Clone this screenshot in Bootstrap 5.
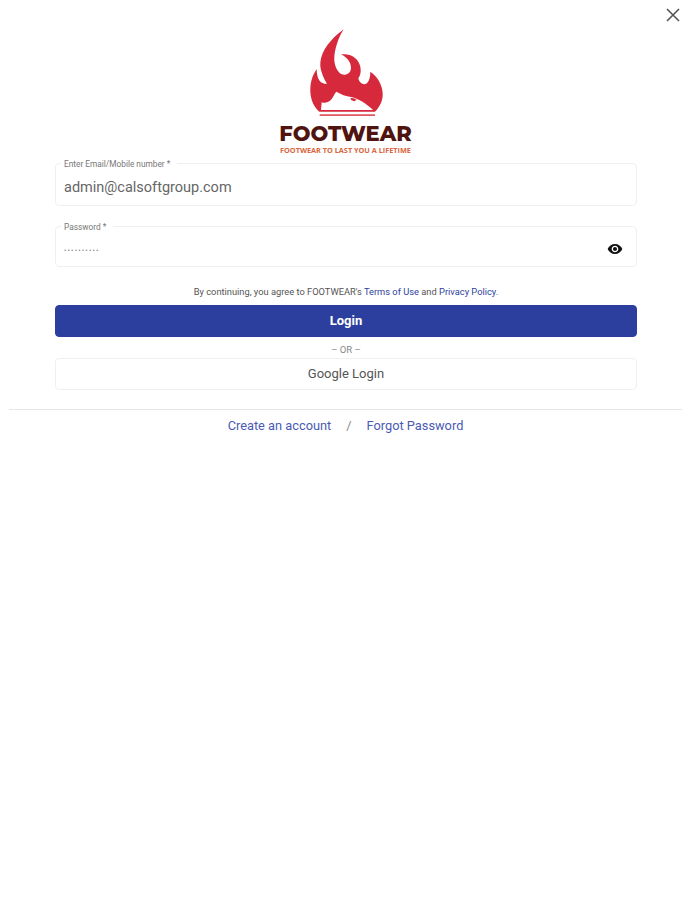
<!DOCTYPE html>
<html lang="en">
<head>
  <meta charset="UTF-8">
  <title>Footwear Login</title>
  <meta name="viewport" content="width=device-width, initial-scale=1">
  <link href="https://cdn.jsdelivr.net/npm/bootstrap@5.3.0/dist/css/bootstrap.min.css" rel="stylesheet">
  <style>
    body {
      background: #fff;
      font-family: Roboto, "Liberation Sans", sans-serif;
      color: #555;
    }
    .login-page {
      position: relative;
      height: 900px;
      padding-top: 25px;
    }
    .close-x {
      position: absolute;
      top: 8px;
      right: 11px;
      line-height: 0;
    }
    .brand-name {
      font-family: "Montserrat", "Open Sans", sans-serif;
      font-size: 21px;
      font-weight: 800;
      line-height: 18px;
      color: #4f1410;
      margin-top: 5px;
    }
    .brand-tag {
      font-family: "Open Sans", sans-serif;
      font-size: 7.3px;
      font-weight: 700;
      line-height: 8px;
      color: #d9663c;
      margin-top: 3px;
    }
    .form-area {
      margin: 9px 54px 0 55px;
    }
    .float-field {
      position: relative;
      border: 1px solid #efefef;
      border-radius: 4px;
    }
    .pass-field {
      margin-top: 20px;
    }
    .float-label {
      position: absolute;
      top: -5px;
      left: 5px;
      padding: 0 7px 0 3px;
      background: #fff;
      font-size: 8.3px;
      line-height: 10px;
      color: #777;
      margin: 0;
    }
    .float-input {
      border: 0;
      box-shadow: none;
      background: transparent;
      padding: 0 8px;
      color: #666;
    }
    .email-input {
      height: 41px;
      font-size: 14.5px;
      padding-top: 5px;
    }
    .pass-input {
      height: 39px;
      font-size: 7px;
      letter-spacing: 1.2px;
      padding-top: 9px;
      color: #888;
    }
    .eye-icon {
      margin: 4px 13px 0 0;
    }
    .agree-text {
      font-size: 9.3px;
      line-height: 12px;
      color: #555;
      margin: 19px 0 7px;
    }
    .agree-text a {
      color: #2d3f9e;
      text-decoration: none;
    }
    .btn-login {
      height: 32px;
      background: #2d3f9e;
      border-color: #2d3f9e;
      border-radius: 4px;
      color: #fff;
      font-size: 13px;
      font-weight: 700;
      padding: 0;
    }
    .or-line {
      font-size: 9.5px;
      line-height: 12px;
      color: #888;
      margin: 7px 0 2px;
    }
    .btn-google {
      height: 32px;
      border: 1px solid #efefef;
      border-radius: 4px;
      background: #fff;
      color: #555;
      font-size: 13px;
      padding: 0;
    }
    .page-rule {
      margin: 19px 9px 8px;
      border-color: #e6e6e6;
      opacity: 1;
    }
    .bottom-links {
      font-size: 12.8px;
      line-height: 16px;
      color: #888;
      gap: 15px;
    }
    .bottom-links a {
      color: #4a5ab4;
      text-decoration: none;
    }
  </style>
</head>
<body>
  <div class="login-page">
    <a class="close-x" href="#" aria-label="Close">
      <svg width="14" height="14" viewBox="0 0 14 14"><path d="M1 1 13 13M13 1 1 13" stroke="#555" stroke-width="1.6" fill="none"/></svg>
    </a>

    <!-- logo -->
    <div class="text-center">
      <svg class="d-block mx-auto" width="90" height="95" viewBox="0 0 270 285">
        <path fill="#d62a3c" d="M128 13C108 28 70 60 60 100C56 118 58 130 62 142C66 155 72 168 78 176C66 178 54 170 50 155C48 148 47 140 47 133C34 150 27 175 28 200C29 225 40 248 55 260L222 260C238 245 246 225 245 205C244 180 230 155 208 140C208 155 204 170 196 176C188 180 176 176 172 160C178 150 181 140 178 125C174 105 155 84 120 88C135 95 150 110 150 128C150 145 135 152 122 148C108 140 98 118 100 95C102 70 112 38 128 13Z"/>
        <path fill="#fff" d="M60 255L62 232C72 236 84 232 92 222C98 214 100 206 106 200C120 208 135 214 150 216C175 222 195 235 216 255Z"/>
        <path fill="#d62a3c" d="M148 219l10 1 9 4-7 5-9-3z"/>
        <path fill="#e0575f" d="M56 268h166v5H56z"/>
      </svg>
      <div class="brand-name">FOOTWEAR</div>
      <div class="brand-tag">FOOTWEAR TO LAST YOU A LIFETIME</div>
    </div>

    <div class="form-area">
      <div class="float-field">
        <label class="float-label" for="email">Enter Email/Mobile number *</label>
        <input id="email" class="form-control float-input email-input" type="text" value="admin@calsoftgroup.com">
      </div>
      <div class="float-field pass-field d-flex align-items-center">
        <label class="float-label" for="pass">Password *</label>
        <input id="pass" class="form-control float-input pass-input" type="password" value="1234567890">
        <svg class="eye-icon flex-shrink-0" width="16" height="16" viewBox="0 0 24 24"><path fill="#111" d="M12 4.5C7 4.5 2.73 7.61 1 12c1.73 4.39 6 7.5 11 7.5s9.27-3.11 11-7.5c-1.73-4.39-6-7.5-11-7.5zM12 17c-2.76 0-5-2.24-5-5s2.24-5 5-5 5 2.24 5 5-2.24 5-5 5zm0-8c-1.66 0-3 1.34-3 3s1.34 3 3 3 3-1.34 3-3-1.34-3-3-3z"/></svg>
      </div>

      <p class="agree-text text-center">By continuing, you agree to FOOTWEAR's <a href="#">Terms of Use</a> and <a href="#">Privacy Policy.</a></p>
      <button class="btn btn-login w-100" type="button">Login</button>
      <div class="or-line text-center">– OR –</div>
      <button class="btn btn-google w-100" type="button">Google Login</button>
    </div>

    <hr class="page-rule">
    <div class="bottom-links d-flex justify-content-center align-items-center">
      <a href="#">Create an account</a>
      <span>/</span>
      <a href="#">Forgot Password</a>
    </div>
  </div>
</body>
</html>
